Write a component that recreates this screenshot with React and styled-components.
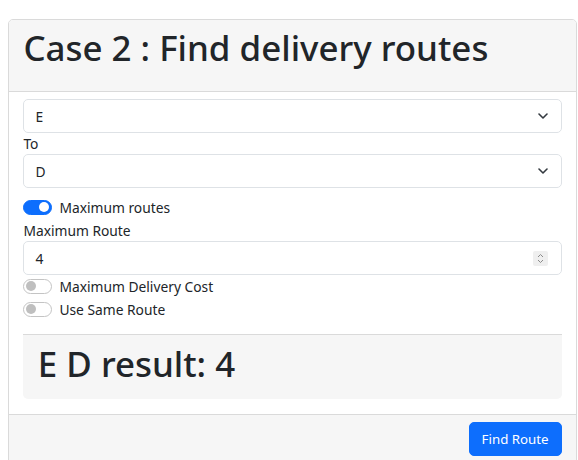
import styled, { createGlobalStyle } from "styled-components";

const Global = createGlobalStyle`
  body {
    margin: 0;
    background: #fff;
    color: #212529;
    font-family: "Noto Sans", "Open Sans", sans-serif;
    font-size: 13.8px;
  }
`;

const Page = styled.div`
  padding: 19px 1px 0 8px;
`;

const Card = styled.div`
  border: 1px solid #dadada;
  border-radius: 5px;
  overflow: hidden;
`;

const CardHeader = styled.div`
  background: #f6f6f6;
  border-bottom: 1px solid #dadada;
  padding: 6px 14.4px 14px;
`;

const Heading = styled.h1`
  margin: 0 0 ${(p) => p.$gap}px;
  font-size: 34.9px;
  font-weight: 500;
  line-height: 43px;
  color: #212529;
`;

const CardBody = styled.div`
  padding: 7px 14.4px 15px;
  display: flex;
  flex-direction: column;
`;

const SelectBox = styled.div`
  height: 34px;
  box-sizing: border-box;
  border: 1px solid #dee2e6;
  border-radius: 5px;
  padding: 0 13px 0 11px;
  display: flex;
  align-items: center;
  justify-content: space-between;
  line-height: 21px;
  background: #fff;
`;

const FieldLabel = styled.label`
  display: block;
  line-height: 21px;
  margin-top: ${(p) => p.$top || 0}px;
`;

const SwitchRow = styled.div`
  display: flex;
  align-items: center;
  gap: 7px;
  height: 22px;
  margin-top: ${(p) => p.$top || 0}px;
`;

const Track = styled.span`
  width: 29px;
  height: 15px;
  box-sizing: border-box;
  border-radius: 8px;
  border: 1px solid ${(p) => (p.$on ? "#0d6efd" : "#c4c4c4")};
  background: ${(p) => (p.$on ? "#0d6efd" : "#fff")};
  display: flex;
  align-items: center;
  justify-content: ${(p) => (p.$on ? "flex-end" : "flex-start")};
  padding: 0 2px;
`;

const Knob = styled.span`
  width: 10px;
  height: 10px;
  border-radius: 50%;
  background: ${(p) => (p.$on ? "#fff" : "#bfbfbf")};
`;

const Spinner = styled.span`
  width: 15px;
  height: 15px;
  background: #efefef;
  border-radius: 2px;
  display: flex;
  align-items: center;
  justify-content: center;
`;

const ResultBox = styled.div`
  margin-top: 14px;
  border-top: 1px solid #dadada;
  background: #f6f6f6;
  border-radius: 0 0 5px 5px;
  padding: 7px 14.4px;
`;

const CardFooter = styled.div`
  background: #f6f6f6;
  border-top: 1px solid #dadada;
  padding: 7px 14.4px 10px;
  display: flex;
  justify-content: flex-end;
`;

const PrimaryButton = styled.button`
  height: 34px;
  padding: 0 12px;
  border: 1px solid #0d6efd;
  border-radius: 5px;
  background: #0d6efd;
  color: #fff;
  font-family: inherit;
  font-size: 13.3px;
  line-height: 21px;
`;

const Chevron = () => (
  <svg width="10" height="6" viewBox="0 0 10 6">
    <polyline points="1,1 5,5 9,1" fill="none" stroke="#343a40" strokeWidth="1.6" strokeLinecap="round" strokeLinejoin="round" />
  </svg>
);

const Select = ({ value }) => (
  <SelectBox>
    <span>{value}</span>
    <Chevron />
  </SelectBox>
);

const Switch = ({ on, label, top }) => (
  <SwitchRow $top={top}>
    <Track $on={on}>
      <Knob $on={on} />
    </Track>
    <span>{label}</span>
  </SwitchRow>
);

const NumberField = ({ value }) => (
  <SelectBox>
    <span>{value}</span>
    <Spinner>
      <svg width="9" height="11" viewBox="0 0 9 11">
        <polyline points="2,4 4.5,1.5 7,4" fill="none" stroke="#8a8a8a" strokeWidth="1" />
        <polyline points="2,7 4.5,9.5 7,7" fill="none" stroke="#8a8a8a" strokeWidth="1" />
      </svg>
    </Spinner>
  </SelectBox>
);

export default function App() {
  const from = "E";
  const to = "D";
  const result = 4;

  return (
    <Page>
      <Global />
      <Card>
        <CardHeader>
          <Heading $gap={8}>Case 2 : Find delivery routes</Heading>
        </CardHeader>
        <CardBody>
          <Select value={from} />
          <FieldLabel>To</FieldLabel>
          <Select value={to} />
          <Switch on label="Maximum routes" top={8} />
          <FieldLabel $top={2}>Maximum Route</FieldLabel>
          <NumberField value={result} />
          <Switch label="Maximum Delivery Cost" />
          <Switch label="Use Same Route" top={1} />
          <ResultBox>
            <Heading $gap={7}>{from} {to} result: {result}</Heading>
          </ResultBox>
        </CardBody>
        <CardFooter>
          <PrimaryButton>Find Route</PrimaryButton>
        </CardFooter>
      </Card>
    </Page>
  );
}
